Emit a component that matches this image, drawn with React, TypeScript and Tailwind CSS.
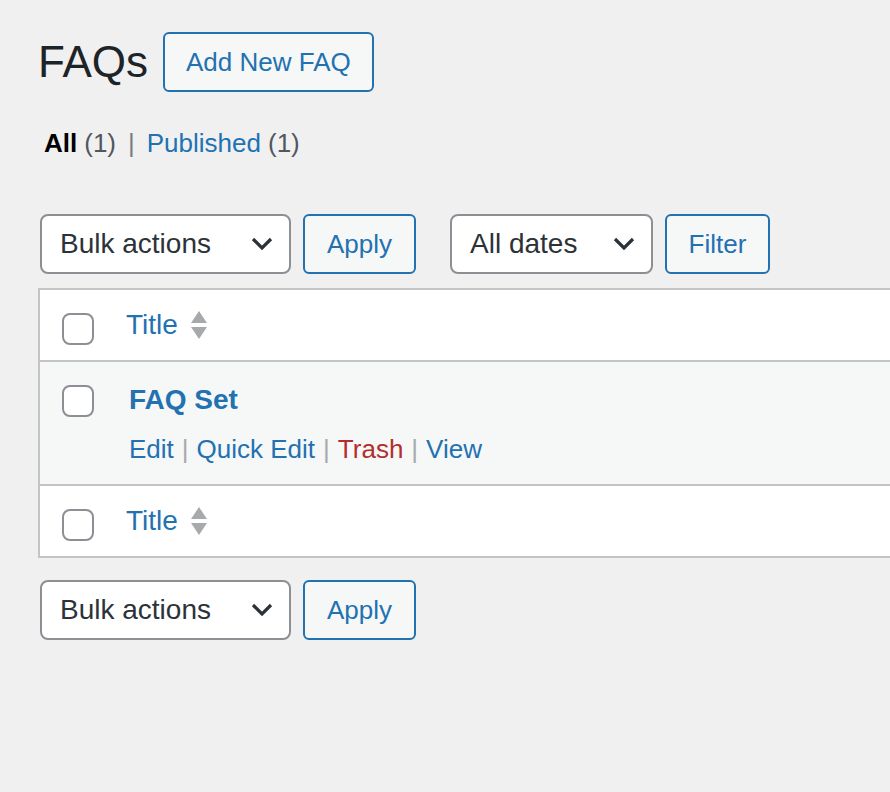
import React from "react";

const font = { fontFamily: '"Liberation Sans", Arial, sans-serif' };

const Chevron = () => (
  <svg width="22" height="14" viewBox="0 0 22 14" fill="none">
    <path d="M2 2l9 9 9-9" stroke="#2c3338" strokeWidth="3.2" />
  </svg>
);

const SortIcon = () => (
  <svg width="18" height="30" viewBox="0 0 18 30" className="ml-[12px]">
    <path d="M9 1L17 13H1z" fill="#a7aaad" />
    <path d="M1 17h16L9 29z" fill="#a7aaad" />
  </svg>
);

const Checkbox = () => (
  <span className="block w-[32px] h-[32px] rounded-[8px] border-2 border-[#8c8f94] bg-white" />
);

const Select: React.FC<{ label: string; w: string }> = ({ label, w }) => (
  <div
    className={`${w} h-[60px] flex items-center justify-between pl-[18px] pr-[16px] bg-white border-2 border-[#8c8f94] rounded-[8px] text-[28px] text-[#2c3338]`}
  >
    <span>{label}</span>
    <Chevron />
  </div>
);

const Btn: React.FC<{ label: string; w: string }> = ({ label, w }) => (
  <button
    className={`${w} h-[60px] flex items-center justify-center bg-[#f6f7f7] border-2 border-[#2271b1] rounded-[6px] text-[26px] text-[#2271b1]`}
  >
    {label}
  </button>
);

const HeadRow = ({ top }: { top?: boolean }) => (
  <div
    className={`h-[72px] flex items-center bg-white ${top ? "border-b-2" : "border-t-2"} border-[#c3c4c7]`}
  >
    <div className="w-[86px] pl-[22px] pt-[8px] flex items-center">
      <Checkbox />
    </div>
    <span className="text-[28px] text-[#2271b1]">Title</span>
    <SortIcon />
  </div>
);

export default function App() {
  return (
    <div className="min-h-screen bg-[#f0f0f1] overflow-hidden pl-[38px] pt-[32px]" style={font}>
      {/* heading */}
      <div className="flex items-center gap-[15px]">
        <h1 className="text-[44px] leading-[60px] text-[#1d2327]">FAQs</h1>
        <button className="h-[60px] px-[21px] border-2 border-[#2271b1] rounded-[6px] bg-[#f6f7f7] text-[26px] text-[#2271b1]">
          Add New FAQ
        </button>
      </div>

      {/* views */}
      <div className="mt-[34px] pl-[6px] flex items-center text-[26px] leading-[34px] text-[#50575e]">
        <span className="font-bold text-black">All</span>
        <span className="ml-[7px]">(1)</span>
        <span className="mx-[12px] text-[#787c82]">|</span>
        <span className="text-[#2271b1]">Published</span>
        <span className="ml-[7px]">(1)</span>
      </div>

      {/* top tablenav */}
      <div className="mt-[54px] pl-[2px] flex items-center">
        <Select label="Bulk actions" w="w-[251px]" />
        <div className="ml-[12px]">
          <Btn label="Apply" w="w-[113px]" />
        </div>
        <div className="ml-[34px]">
          <Select label="All dates" w="w-[203px]" />
        </div>
        <div className="ml-[12px]">
          <Btn label="Filter" w="w-[105px]" />
        </div>
      </div>

      {/* table */}
      <div className="mt-[14px] w-[880px] border-2 border-[#c3c4c7] bg-white">
        <HeadRow top />
        <div className="h-[122px] bg-[#f6f7f7] flex">
          <div className="w-[89px] pl-[22px] pt-[23px]">
            <Checkbox />
          </div>
          <div className="pt-[19px]">
            <div className="text-[28px] leading-[38px] font-bold text-[#2271b1]">FAQ Set</div>
            <div className="mt-[13px] text-[26px] leading-[34px] flex items-center">
              <span className="text-[#2271b1]">Edit</span>
              <span className="mx-[8px] text-[#a7aaad]">|</span>
              <span className="text-[#2271b1]">Quick Edit</span>
              <span className="mx-[8px] text-[#a7aaad]">|</span>
              <span className="text-[#b32d2e]">Trash</span>
              <span className="mx-[8px] text-[#a7aaad]">|</span>
              <span className="text-[#2271b1]">View</span>
            </div>
          </div>
        </div>
        <HeadRow />
      </div>

      {/* bottom tablenav */}
      <div className="mt-[22px] pl-[2px] flex items-center">
        <Select label="Bulk actions" w="w-[251px]" />
        <div className="ml-[12px]">
          <Btn label="Apply" w="w-[113px]" />
        </div>
      </div>
    </div>
  );
}
